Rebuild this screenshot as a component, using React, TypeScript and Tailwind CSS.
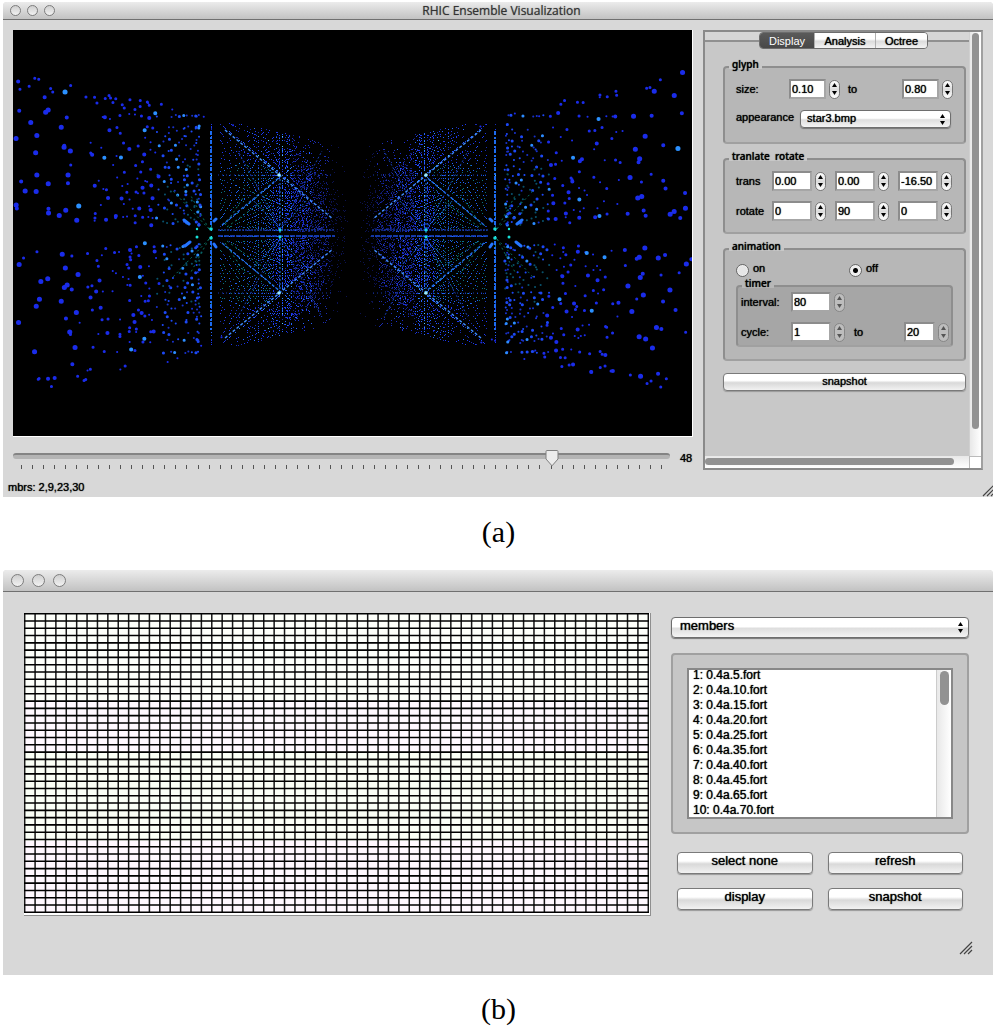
import { useId, useState } from "react";
import type { ReactNode } from "react";

const soft = "[text-shadow:0_0_1px_#000]";

/* ---------- particle field ---------- */

const VIEW_W = 679;
const VIEW_H = 406;
const CX = 340;
const CY = 204;

type Layer = { color: string; width: number; round: boolean; d: string };

function noise(a: number, b: number) {
  const v = Math.sin(a * 127.1 + b * 311.7) * 43758.5453;
  return v - Math.floor(v);
}

function buildField(): Layer[] {
  const hits = new Map<string, { x: number; y: number; n: number }>();
  for (let k = 2; k <= 14; k++) {
    for (let c = 5; c <= 44; c++) {
      const ratio = k / c;
      if (ratio > 2.4) continue;
      const dx = 142 * ratio;
      const limit = 86 + 0.22 * dx;
      for (let b = -Math.ceil(c * 1.4); b <= Math.ceil(c * 1.4); b++) {
        if (b === 0 && dx > 152) continue;
        const dy = b === 0 ? (c % 3 === 0 ? -4 : 2) : (118 * b) / c;
        if (Math.abs(dy) > limit) continue;
        for (const side of [-1, 1]) {
          const x = Math.round(CX + side * dx);
          const y = Math.round(CY + dy);
          const key = x + "," + y;
          const old = hits.get(key);
          if (old) old.n++;
          else hits.set(key, { x, y, n: 1 });
        }
      }
    }
  }
  const layers = new Map<string, Layer>();
  const add = (color: string, width: number, round: boolean, d: string) => {
    const id = color + width + round;
    const layer = layers.get(id) ?? { color, width, round, d: "" };
    layer.d += d;
    layers.set(id, layer);
  };
  for (const p of hits.values()) {
    const dx = Math.abs(p.x - CX);
    const dy = Math.abs(p.y - CY);
    const r = noise(p.x, p.y);
    const q = noise(p.y, p.x);
    const edge = dy / (86 + 0.22 * dx);
    const keep = Math.min(0.9, (dx - 4) / 105) * (1 - 0.5 * edge * edge);
    if (r > keep + (dx > 70 ? (p.n - 1) * 0.15 : 0)) continue;
    if (dx < 60 && edge > 0.3 + dx * 0.01 && q < 0.7) continue;
    if (dx > 195 && q < 0.12) continue;
    let width = 1;
    let round = false;
    if (dx > 146) {
      round = true;
      width = q > 0.7 ? 3 : 2;
    }
    if (dx > 195) width = q > 0.75 ? 4 : q > 0.4 ? 3 : 2;
    if (dx > 270) width = q > 0.5 ? 5 : q > 0.25 ? 4 : 3;
    let color = q > 0.35 ? "#1c38f0" : "#182cb0";
    if (dx < 24) color = "#0c1250";
    else if (dx < 42) color = q > 0.7 ? "#1c2cb0" : "#101a70";
    else if (dx < 62) color = p.n > 2 && q > 0.6 ? "#2563ff" : q > 0.5 ? "#1a2ccc" : "#14207c";
    else if (dx > 195) color = q > 0.96 ? "#2b90ff" : "#1a2cea";
    else if (dx > 146) color = dy < 70 && q < 0.35 ? "#08506a" : q > 0.9 ? "#2c8cff" : q > 0.5 ? "#1c48f4" : "#1830c8";
    else if (p.n >= 4) color = "#56c8ff";
    else if (p.n === 3) color = "#2f92ff";
    else if (p.n === 2) color = "#2563ff";
    else if (dy < 70 && dx > 80) color = q > 0.65 ? "#0a7080" : q > 0.3 ? "#1a60f0" : "#1838b0";
    if (round) {
      const spread = dx > 255 ? 20 : dx > 195 ? 11 : 3;
      const jx = (noise(p.x + 3, p.y + 7) - 0.5) * spread;
      const jy = (noise(p.x + 11, p.y + 5) - 0.5) * spread * 0.7;
      add(color, width, true, `M${(p.x + jx).toFixed(1)} ${(p.y + jy).toFixed(1)}h.1`);
    } else {
      add(color, width, false, `M${p.x} ${p.y + 0.5}h1`);
    }
  }
  for (let i = 0; i < 64; i++) {
    const dx = 120 + noise(i, 3) * 205;
    const base = 86 + 0.22 * dx;
    const dy = base - 12 + noise(i, 5) * 14;
    const sx = i % 2 ? 1 : -1;
    const sy = noise(i, 9) > 0.5 ? 1 : -1;
    add("#1a2cea", dx > 190 ? 3 : 2, true, `M${(CX + sx * dx).toFixed(1)} ${(CY + sy * dy).toFixed(1)}h.1`);
  }
  return [...layers.values()].sort((a, b) => a.width - b.width);
}

const FIELD = buildField();

function ParticleView() {
  return (
    <svg
      role="img"
      aria-label="particle view"
      viewBox={`0 0 ${VIEW_W} ${VIEW_H}`}
      className="block w-full border-r border-b border-white bg-black"
    >
      {FIELD.map((l) => (
        <path
          key={l.color + l.width + l.round}
          d={l.d}
          stroke={l.color}
          strokeWidth={l.width}
          strokeLinecap={l.round ? "round" : "butt"}
          fill="none"
        />
      ))}
      <g transform="translate(0 1)">
        <g stroke="#3f8cff" strokeWidth="1.4" strokeDasharray="3 2" fill="none">
          <path d="M212 99L320 188M468 99L360 188M212 307L320 218M468 307L360 218" />
          <path d="M209 194L268 145M471 194L412 145M209 212L268 261M471 212L412 261" stroke="#1f6ce0" />
          <path d="M198 100V196M482 100V196M198 210V300M482 210V300" strokeWidth="2" stroke="#1d6cf0" strokeDasharray="4 2 2 1" />
          <path d="M205 205H322M475 205H358" stroke="#1a49d8" strokeDasharray="5 1" />
          <path d="M205 199H322M475 199H358" stroke="#14349c" strokeDasharray="2 1" />
        </g>
        <g stroke="#1668d8" strokeWidth="1" strokeDasharray="2 2" fill="none">
          <path d="M267 144V262M413 144V262" stroke="#1f78e8" />
          <path d="M267 198L225 120M267 198L309 120M413 198L455 120M413 198L371 120" stroke="#153fb4" />
          <path d="M267 208L225 286M267 208L309 286M413 208L455 286M413 208L371 286" stroke="#153fb4" />
          <path d="M267 198L295 168M413 198L385 168M267 208L295 238M413 208L385 238M267 198L239 168M413 198L441 168M267 208L239 238M413 208L441 238" />
          <path d="M205 144H320M360 144H475M205 262H320M360 262H475" stroke="#1636b0" strokeDasharray="1 3" />
          <path d="M196 198L160 160M196 208L160 246M484 198L520 160M484 208L520 246M196 198L178 165M196 208L178 241M484 198L502 165M484 208L502 241" stroke="#087060" strokeDasharray="2 3" />
          <path d="M214 196L250 170M214 210L250 236M466 196L430 170M466 210L430 236M212 194L232 164M212 212L232 242M468 194L448 164M468 212L448 242" stroke="#0a7c70" strokeDasharray="2 3" />
        </g>
        <g fill="#9be8ff">
          <circle cx="266" cy="144" r="1.8" />
          <circle cx="413" cy="144" r="1.8" />
          <circle cx="266" cy="262" r="1.8" />
          <circle cx="413" cy="262" r="1.8" />
        </g>
        <g fill="#18e0d8">
          <circle cx="198" cy="198" r="1.8" />
          <circle cx="482" cy="198" r="1.8" />
          <circle cx="198" cy="207" r="1.8" />
          <circle cx="482" cy="207" r="1.8" />
          <circle cx="184" cy="206" r="1.5" />
          <circle cx="496" cy="206" r="1.5" />
          <circle cx="184" cy="198" r="1.2" />
          <circle cx="496" cy="198" r="1.2" />
          <circle cx="267" cy="199" r="1.5" />
          <circle cx="413" cy="199" r="1.5" />
          <circle cx="267" cy="206" r="1.5" />
          <circle cx="413" cy="206" r="1.5" />
        </g>
        <g stroke="#2474ff" strokeWidth="3" strokeLinecap="round">
          <path d="M171 189L176 193M509 189L504 193M172 215L177 211M508 215L503 211M201 190L203 188M479 190L477 188M201 213L203 216M479 213L477 216" />
        </g>
      </g>
    </svg>
  );
}

/* ---------- shared controls ---------- */

function TitleBar({ title, large }: { title?: string; large?: boolean }) {
  return (
    <header
      className={`grid grid-cols-3 items-center border-b border-[#707070] bg-linear-to-b from-[#ececec] to-[#c2c2c2] ${
        large ? "h-[22px] pl-2" : "h-[18px] pl-[7px]"
      }`}
    >
      <div className={large ? "flex gap-2" : "flex gap-[6px]"}>
        {["Close", "Minimize", "Zoom"].map((n) => (
          <button
            key={n}
            aria-label={n}
            className={`rounded-full border border-[#7c7c7c] bg-linear-to-b from-[#cfcfcf] to-[#f2f2f2] ${
              large ? "size-[13px]" : "size-[11px]"
            }`}
          />
        ))}
      </div>
      {title && (
        <h1 className="text-center font-['Open_Sans',sans-serif] text-[12px] leading-4 font-medium whitespace-nowrap text-[#333] [text-shadow:0_0_1px_#666]">
          {title}
        </h1>
      )}
    </header>
  );
}

function Arrow({ down }: { down?: boolean }) {
  return (
    <svg viewBox="0 0 5 4" className="block h-1 w-[5px]" fill="currentColor">
      <path d={down ? "M0 0H5L2.5 4Z" : "M0 4H5L2.5 0Z"} />
    </svg>
  );
}

function Spin({ label, initial, width, dim }: { label: string; initial: string; width: string; dim?: boolean }) {
  const [value, setValue] = useState(initial);
  const decimals = initial.includes(".") ? 2 : 0;
  const step = decimals ? 0.1 : 1;
  const bump = (d: number) => setValue((Number(value) + d).toFixed(decimals));
  return (
    <div className="flex items-center gap-[3px]">
      <input
        aria-label={label}
        value={value}
        onChange={(e) => setValue(e.target.value)}
        className={`h-5 border-2 border-[#8c8c8c] border-r-[#a6a6a6] border-b-[#a6a6a6] bg-white pl-px text-[11px] outline-none ${soft} ${width}`}
      />
      <div
        className={`flex h-[19px] w-[11px] flex-col overflow-hidden rounded-full border ${
          dim
            ? "border-[#868686] bg-[#bdbdbd] text-[#555]"
            : "border-[#777] bg-linear-to-b from-white via-[#dcdcdc] to-white text-black"
        }`}
      >
        <button aria-label={`${label} up`} onClick={() => bump(step)} className="flex flex-1 items-center justify-center">
          <Arrow />
        </button>
        <button aria-label={`${label} down`} onClick={() => bump(-step)} className="flex flex-1 items-center justify-center">
          <Arrow down />
        </button>
      </div>
    </div>
  );
}

function Dropdown({ label, options, size }: { label: string; options: string[]; size: string }) {
  return (
    <div className="relative flex-1">
      <select
        aria-label={label}
        className={`block w-full appearance-none rounded-[4px] border border-[#6e6e6e] bg-linear-to-b from-white from-45% via-[#dedede] via-55% to-[#f4f4f4] shadow-[0_1px_1px_#777] outline-none ${soft} ${size}`}
      >
        {options.map((o) => (
          <option key={o}>{o}</option>
        ))}
      </select>
      <span className="pointer-events-none absolute inset-y-0 right-[6px] flex flex-col justify-center gap-[3px]">
        <Arrow />
        <Arrow down />
      </span>
    </div>
  );
}

function PushButton({ children, size }: { children: ReactNode; size: string }) {
  return (
    <button
      className={`rounded-[4px] border border-[#7a7a7a] bg-linear-to-b from-white from-40% via-[#d9d9d9] via-55% to-[#f2f2f2] shadow-[0_1px_1px_#999] ${soft} ${size}`}
    >
      {children}
    </button>
  );
}

function Group({ title, bg, legendBg, children }: { title: string; bg: string; legendBg: string; children: ReactNode }) {
  return (
    <fieldset className="min-w-0">
      <legend
        className={`relative ml-1.5 block px-[3px] font-['Noto_Sans',sans-serif] text-[10px] leading-[10px] font-medium whitespace-pre text-black ${soft} ${legendBg}`}
      >
        {title}
      </legend>
      <div className={`-mt-[3px] rounded-[4px] border-2 border-[#8e8e8e] border-b-[#a0a0a0] ${bg}`}>{children}</div>
    </fieldset>
  );
}

function Grip() {
  return (
    <svg viewBox="0 0 14 14" className="block size-[14px] shrink-0" stroke="#444" strokeWidth="1.2" fill="none">
      <path d="M1 13L13 1M5 13L13 5M9 13L13 9" />
    </svg>
  );
}

/* ---------- control panel ---------- */

function Radio({ label, checked, onPick }: { label: string; checked: boolean; onPick: () => void }) {
  const id = useId();
  return (
    <div className="flex items-center gap-1">
      <input
        id={id}
        type="radio"
        name="animation"
        checked={checked}
        onChange={onPick}
        className="size-[13px] appearance-none rounded-full border border-[#666] bg-[radial-gradient(circle,#e6e6e6_50%,#ffffff_100%)] checked:bg-[radial-gradient(circle,#000_2px,#eee_3px)]"
      />
      <label htmlFor={id} className="pb-1">
        {label}
      </label>
    </div>
  );
}

function ControlPanel() {
  const [tab, setTab] = useState("Display");
  const [anim, setAnim] = useState("off");
  return (
    <aside className="grid h-[440px] w-[280px] shrink-0 grid-cols-[1fr_12px] grid-rows-[1fr_12px] border-2 border-[#8a8a8a] border-r-[#a0a0a0] bg-white">
      <div className="bg-linear-to-b from-[#d6d6d6] from-[9px] via-[#c8c8c8] via-[9px] to-[#c8c8c8]">
        <div role="tablist" className="flex h-[17px] items-center">
          <span className="h-[2px] flex-1 bg-[#909090]" />
          <div className="flex h-[17px] overflow-hidden rounded-[4px] border border-[#6c6c6c]">
            {[
              ["Display", "w-[54px]"],
              ["Analysis", "w-[61px]"],
              ["Octree", "w-[52px]"],
            ].map(([t, w]) => (
              <button
                key={t}
                role="tab"
                aria-selected={tab === t}
                onClick={() => setTab(t)}
                className={`${w} leading-[14px] ${
                  tab === t
                    ? "bg-linear-to-b from-[#5a5a5a] to-[#484848] text-white"
                    : `border-l border-[#b0b0b0] bg-linear-to-b from-white from-40% via-[#dcdcdc] via-55% to-[#f4f4f4] ${soft}`
                }`}
              >
                {t}
              </button>
            ))}
          </div>
          <span className="h-[2px] w-[41px] bg-[#909090]" />
        </div>

        <div className={`flex flex-col gap-[7px] pt-[10px] pr-[3px] pl-[18px] ${soft}`}>
          <Group title="glyph" bg="bg-[#b7b7b7]" legendBg="bg-[#c8c8c8]">
            <div className="flex h-[74px] flex-col gap-[11px] pt-[11px] pl-[11px]">
              <div className="flex items-center">
                <span className="w-[53px]">size:</span>
                <Spin label="size from" initial="0.10" width="w-[37px]" />
                <span className="ml-2 w-[54px]">to</span>
                <Spin label="size to" initial="0.80" width="w-[37px]" />
              </div>
              <div className="flex items-center gap-[6px] pr-[13px]">
                <span className="pb-1">appearance</span>
                <Dropdown
                  label="appearance"
                  options={["star3.bmp", "star2.bmp", "star1.bmp"]}
                  size="h-[18px] pb-[2px] pl-[6px] text-[11px]"
                />
              </div>
            </div>
          </Group>

          <Group title="tranlate  rotate" bg="bg-[#b7b7b7]" legendBg="bg-[#c8c8c8]">
            <div className="flex h-[72px] flex-col gap-[10px] pt-[11px] pl-[11px]">
              {[
                ["trans", "0.00", "0.00", "-16.50"],
                ["rotate", "0", "90", "0"],
              ].map(([name, ...vals]) => (
                <div key={name} className="flex items-center gap-[9px]">
                  <span className="w-[27px]">{name}</span>
                  {vals.map((v, i) => (
                    <Spin key={i} label={`${name} ${"xyz"[i]}`} initial={v} width="w-[40px]" />
                  ))}
                </div>
              ))}
            </div>
          </Group>

          <Group title="animation" bg="bg-[#b7b7b7]" legendBg="bg-[#c8c8c8]">
            <div className="h-[109px] pt-[11px] pr-[11px] pl-[11px]">
              <div className="grid h-[14px] grid-cols-[113px_1fr]">
                <Radio label="on" checked={anim === "on"} onPick={() => setAnim("on")} />
                <Radio label="off" checked={anim === "off"} onPick={() => setAnim("off")} />
              </div>
              <div className="pt-[3px]">
                <Group title="timer" bg="bg-[#a6a6a6]" legendBg="bg-[#b7b7b7]">
                  <div className="flex h-[58px] flex-col gap-[10px] pt-[5px] pl-[3px]">
                    <div className="flex items-center">
                      <span className="w-[50px]">interval:</span>
                      <Spin label="interval" initial="80" width="w-[40px]" dim />
                    </div>
                    <div className="flex items-center">
                      <span className="w-[50px]">cycle:</span>
                      <Spin label="cycle from" initial="1" width="w-[40px]" dim />
                      <span className="ml-[9px] w-[50px]">to</span>
                      <Spin label="cycle to" initial="20" width="w-[31px]" dim />
                    </div>
                  </div>
                </Group>
              </div>
            </div>
          </Group>

          <div className="grid pt-[5px]">
            <PushButton size="h-[18px] pb-[2px] text-[11px] leading-[14px]">snapshot</PushButton>
          </div>
        </div>
      </div>
      <div className="border-l border-[#d0d0d0] bg-linear-to-r from-[#e8e8e8] to-white pt-px pl-[2px]">
        <div className="h-[396px] w-[7px] rounded-full bg-[#929292]" />
      </div>
      <div className="bg-linear-to-b from-[#e8e8e8] to-white pt-[2px]">
        <div className="h-[7px] w-[249px] rounded-full bg-[#929292]" />
      </div>
      <div className="border-t border-l border-[#bbb] bg-white" />
    </aside>
  );
}

function MemberSlider() {
  const [value, setValue] = useState(48);
  const max = 58;
  return (
    <div className="flex items-start pt-[14px]">
      <div className="relative flex-1">
        <div className="absolute inset-x-0 top-[2px] h-[6px] rounded-full border-t-2 border-[#848484] bg-[#b4b4b4]" />
        <input
          aria-label="member"
          type="range"
          min={0}
          max={max}
          value={value}
          onChange={(e) => setValue(Number(e.target.value))}
          className="relative block h-[14px] w-full appearance-none bg-transparent opacity-0"
        />
        <div className="pointer-events-none absolute inset-x-[7px] -top-px">
          <svg
            viewBox="0 0 14 17"
            className="relative block h-[17px] w-[14px] -translate-x-1/2"
            style={{ left: `${(value / max) * 100}%` }}
          >
            <path d="M1 1.5Q1 .5 2 .5H12Q13 .5 13 1.5V9L7 15.8L1 9Z" fill="#ececec" stroke="#808080" />
          </svg>
        </div>
        <div className="flex justify-between px-2">
          {Array.from({ length: max + 1 }, (_, i) => (
            <span key={i} className="h-[4px] w-px bg-[#555]" />
          ))}
        </div>
      </div>
      <output className={`w-[23px] pl-[10px] leading-[14px] ${soft}`}>{value}</output>
    </div>
  );
}

/* ---------- member grid ---------- */

const COLS = 60;
const ROWS = 41;

function MemberGrid() {
  const w = 625;
  const h = 300;
  let d = "";
  for (let i = 0; i <= COLS; i++) d += `M${(0.7 + (i * (w - 1.4)) / COLS).toFixed(2)} 0V${h}`;
  let e = "";
  for (let j = 0; j <= ROWS; j++) e += `M0 ${(0.7 + (j * (h - 1.4)) / ROWS).toFixed(2)}H${w}`;
  return (
    <div className="min-w-0 flex-1 border-r border-b border-[#8f8f8f] bg-white pr-px pb-[2px]">
      <svg role="img" aria-label="member grid" viewBox={`0 0 ${w} ${h}`} className="block w-full">
        <rect width={w} height={h} fill="#fdfffa" />
        <rect y="88" width={w} height="50" fill="#fff8ff" />
        <rect y="138" width={w} height="90" fill="#fafff6" />
        <rect y="228" width={w} height="72" fill="#fff8ff" />
        <path d={d} stroke="#000" strokeWidth="1.5" opacity="0.9" />
        <path d={e} stroke="#000" strokeWidth="1.6" />
      </svg>
    </div>
  );
}

const MEMBERS = [5, 10, 15, 20, 25, 35, 40, 45, 65, 70];

export default function App() {
  return (
    <main className="bg-white px-[3px] pt-[2px] font-['Liberation_Sans',Arial,sans-serif] text-[11px] leading-[14px] text-black">
      <section className="mr-px overflow-hidden rounded-t-[4px] bg-[#d8d8d8]">
        <TitleBar title="RHIC Ensemble Visualization" />
        <div className="flex gap-[10px] pt-[10px] pr-[10px] pl-[10px]">
          <div className="min-w-0 flex-1">
            <ParticleView />
            <MemberSlider />
          </div>
          <ControlPanel />
        </div>
        <div className="flex h-[27px] items-end justify-between pl-[5px]">
          <p className={`pb-[3px] ${soft}`}>mbrs: 2,9,23,30</p>
          <div className="flex w-[11px] overflow-hidden">
            <Grip />
          </div>
        </div>
      </section>

      <p className="flex h-[73px] items-center justify-center pb-1 font-['Liberation_Serif',serif] text-[30px] leading-9">(a)</p>

      <section className="mr-px overflow-hidden rounded-t-[4px] bg-[#d8d8d8]">
        <TitleBar large />
        <div className="flex gap-5 pt-[21px] pr-6 pl-[21px]">
          <MemberGrid />
          <div className="flex w-[298px] shrink-0 flex-col pt-1 text-[13px]">
            <div className="flex">
              <Dropdown label="list" options={["members", "groups"]} size="h-[21px] pb-1 pl-2 text-[13px] leading-4" />
            </div>
            <div className="mt-[15px] rounded-[4px] border-2 border-[#a0a0a0] bg-[#c6c6c6] px-[14px] py-[13px]">
              <div className="flex h-[151px] overflow-hidden border-2 border-[#888] bg-white">
                <ul className={`-mt-[2px] flex-1 pl-1 text-[12px] leading-[15px] ${soft}`}>
                  {MEMBERS.map((m, i) => (
                    <li key={m}>{`${i + 1}: 0.4a.${m}.fort`}</li>
                  ))}
                </ul>
                <div className="w-[15px] border-l border-[#ccc] bg-linear-to-r from-[#e8e8e8] to-white pt-px pl-[3px]">
                  <div className="h-[34px] w-[9px] rounded-full bg-[#929292]" />
                </div>
              </div>
            </div>
            <div className="mt-[18px] grid grid-cols-2 gap-x-[15px] gap-y-[14px] px-[6px]">
              {["select none", "refresh", "display", "snapshot"].map((t) => (
                <PushButton key={t} size="h-[22px] pb-1 text-[13px] leading-4">
                  {t}
                </PushButton>
              ))}
            </div>
          </div>
        </div>
        <div className="flex justify-end pt-[25px] pr-5 pb-5">
          <Grip />
        </div>
      </section>

      <p className="flex h-[57px] items-center justify-center pt-[10px] font-['Liberation_Serif',serif] text-[30px] leading-9">(b)</p>
    </main>
  );
}
